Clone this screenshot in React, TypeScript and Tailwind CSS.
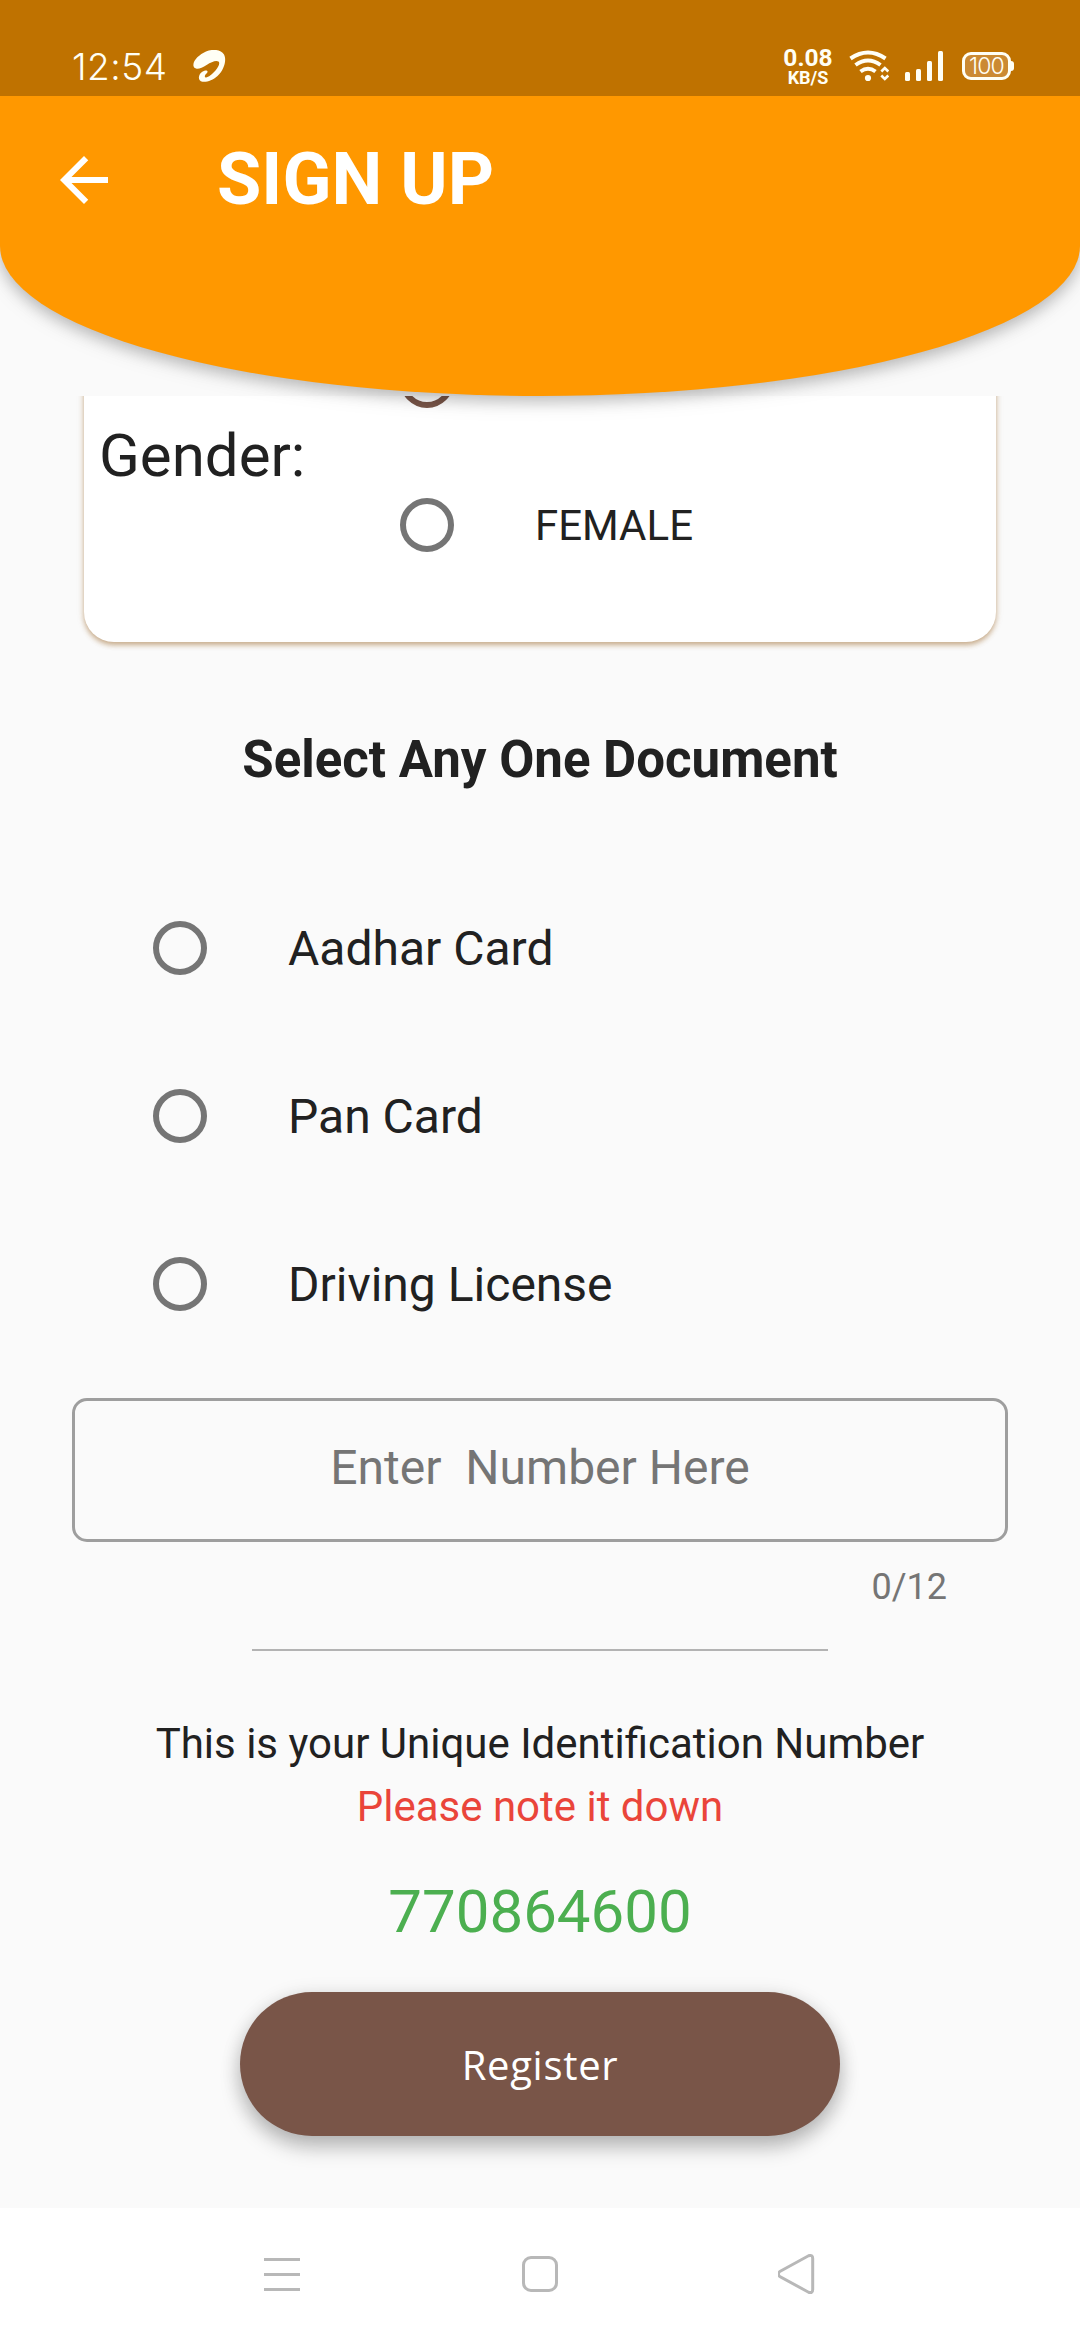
const DOCUMENTS = ["Aadhar Card", "Pan Card", "Driving License"];

function Radio({ selected = false }: { selected?: boolean }) {
  return (
    <span
      className={
        selected
          ? "flex size-[54px] shrink-0 items-center justify-center rounded-full border-[6px] border-[#795548]"
          : "flex size-[54px] shrink-0 items-center justify-center rounded-full border-[6px] border-[#757575]"
      }
    >
      {selected && <span className="size-[27px] rounded-full bg-[#795548]" />}
    </span>
  );
}

function StatusBar() {
  return (
    <div className="relative z-20 flex h-24 items-start justify-between bg-[#bf7200] pr-[66px] pl-[72px] text-[#fffff5]">
      <div className="flex items-start">
        <span className="mt-[42px] w-[121px] font-[Inter,sans-serif] text-[37px] leading-[50px] font-light tracking-[0.5px] whitespace-nowrap [font-feature-settings:'calt'_0]">
          12:54
        </span>
        <svg className="mt-[50px] h-[32px] w-[33px]" viewBox="0 0 33 32" fill="currentColor">
          <path
            fillRule="evenodd"
            d="M0.4 15.5C0 10 6.500 4.500 13 1.500C20-1.400 28-.5 31 4.500C34 10 31 20 24.500 26C20 30 13.500 32.500 9.500 31.700C6.500 31 5.500 29 6 26.500C6.700 23.500 9.500 20.800 12.500 20.500C14.500 20.500 15.200 21.700 14 23C12.700 24.300 11 26 12.200 27.200C14 28.500 19 24.500 22.500 20.500C25 17.500 27.500 13.300 25.500 11.500C23 9.800 18 12.200 14 14.700C9 17.800 5.500 19.300 3 18.500C1.300 18 .6 17 .4 15.500Z"
          />
        </svg>
      </div>
      <div className="flex items-start">
        <div className="mt-[46px] flex w-12 flex-col items-center font-bold whitespace-nowrap">
          <span className="text-[24.5px] leading-[23px]">0.08</span>
          <span className="text-[18px] leading-[17px]">KB/S</span>
        </div>
        <svg className="mt-[50px] ml-[17px] h-8 w-10" viewBox="0 0 40 32" fill="none" stroke="currentColor">
          <path d="M1.500 8.500Q19 -3.500 36.500 8.500" strokeWidth="4" />
          <path d="M6.500 15Q19 6 31.500 15" strokeWidth="4" />
          <path d="M11.500 21.500Q19 16 26.500 21.500" strokeWidth="4" />
          <circle cx="19" cy="28" r="3.100" fill="currentColor" stroke="none" />
          <path d="M32.300 21.500L35.800 18L39.300 21.500M32.300 25.500L35.800 29L39.300 25.500" strokeWidth="2.600" />
        </svg>
        <svg className="mt-[50px] ml-[15px] h-8 w-10" viewBox="0 0 40 32" fill="currentColor">
          <rect x="1" y="22" width="5" height="9" rx="1.500" />
          <rect x="12" y="19" width="5" height="12" rx="1.500" />
          <rect x="23" y="11" width="5" height="20" rx="1.500" />
          <rect x="34" y="1" width="5" height="30" rx="1.500" />
        </svg>
        <div className="mt-[52px] ml-[18px] flex items-center">
          <div className="flex h-7 w-[49px] items-center justify-center rounded-[9px] border-[3px] border-[#fffff5] bg-[#cb8a33] font-[Inter,sans-serif] text-[23px] leading-7 font-light tracking-[-0.8px]">
            100
          </div>
          <div className="h-[10px] w-[3px] rounded-r-[3px] bg-[#fffff5]" />
        </div>
      </div>
    </div>
  );
}

function AppBar() {
  return (
    <header className="relative z-10 h-[300px] rounded-b-[50%_150px] bg-[#ff9800] px-12 pt-12 shadow-[0_6px_14px_rgba(0,0,0,0.18),0_4px_24px_rgba(0,0,0,0.12)]">
      <div className="flex h-[72px] items-center text-white">
        <svg className="size-[72px]" viewBox="0 0 24 24" fill="currentColor">
          <path d="M20 11H7.830l5.590-5.590L12 4l-8 8 8 8 1.410-1.410L7.830 13H20v-2z" />
        </svg>
        <h1 className="ml-[97px] text-[72px] leading-[72px] font-bold">SIGN UP</h1>
      </div>
    </header>
  );
}

function NavigationBar() {
  return (
    <nav className="flex h-[132px] items-center justify-between bg-white px-[262px] text-[#b8b8b8]">
      <div className="flex w-10 flex-col items-center gap-3">
        <span className="h-[3px] w-9 bg-current" />
        <span className="h-[3px] w-9 bg-current" />
        <span className="h-[3px] w-9 bg-current" />
      </div>
      <span className="size-9 rounded-[9px] border-[3px] border-current" />
      <svg className="h-10 w-10" viewBox="0 0 40 40" fill="none" stroke="currentColor" strokeWidth="3">
        <path d="M1.800 17.500L30.500 1.800Q34.700 .5 34.700 4.500V35.500Q34.700 39.500 30.500 38.200L1.800 22.500Q-1 20 1.800 17.500Z" />
      </svg>
    </nav>
  );
}

export default function App() {
  return (
    <div className="flex h-[2340px] w-[1080px] flex-col overflow-hidden bg-[#fafafa] font-[Roboto,sans-serif] text-[#212121]">
      <StatusBar />
      <AppBar />

      <main className="flex h-[1812px] flex-col items-center overflow-hidden">
        <section className="-mt-[87px] flex h-[333px] w-[912px] shrink-0 rounded-[30px] bg-white pl-[15px] shadow-[0_3px_5px_rgba(150,95,30,0.45),0_1px_8px_rgba(150,95,30,0.12)]">
          <h2 className="mt-[107px] w-[301px] text-[60px] leading-[80px]">Gender:</h2>
          <div className="flex flex-col">
            <div className="flex h-36 items-center">
              <Radio selected />
            </div>
            <div className="flex h-36 items-center">
              <Radio />
              <span className="ml-[81px] text-[42px]">FEMALE</span>
            </div>
          </div>
        </section>

        <h2 className="mt-[88px] text-[51px] leading-[60px] font-bold whitespace-nowrap">
          Select Any One Document
        </h2>

        <div className="mt-[74px] flex w-full flex-col pl-[153px]">
          {DOCUMENTS.map((name) => (
            <div key={name} className="flex h-[168px] items-center">
              <Radio />
              <span className="ml-[81px] pt-0.5 text-[48px]">{name}</span>
            </div>
          ))}
        </div>

        <div className="mt-[30px] flex h-36 w-[936px] shrink-0 items-center justify-center rounded-[15px] border-[3px] border-[#9e9e9e] pb-1 text-[48px] whitespace-pre text-[#757575]">
          {"Enter  Number Here"}
        </div>
        <div className="mt-6 w-[814px] text-right text-[36px] leading-[42px] text-[#757575]">0/12</div>
        <div className="mt-[41px] h-[2px] w-[576px] shrink-0 bg-[#b3b3b3]" />

        <p className="mt-[61px] text-[42px] leading-[63px]">This is your Unique Identification Number</p>
        <p className="text-[42px] leading-[63px] text-[#ea453a]">Please note it down</p>
        <p className="mt-[39px] text-[60px] leading-[70px] text-[#4caf50]">770864600</p>

        <button className="mt-[45px] h-36 w-[600px] shrink-0 rounded-full bg-[#795548] pt-0.5 font-['Open_Sans',sans-serif] text-[40px] tracking-[0.7px] text-white shadow-[0_12px_20px_rgba(0,0,0,0.22),0_3px_20px_rgba(0,0,0,0.12)]">
          Register
        </button>
      </main>

      <NavigationBar />
    </div>
  );
}
